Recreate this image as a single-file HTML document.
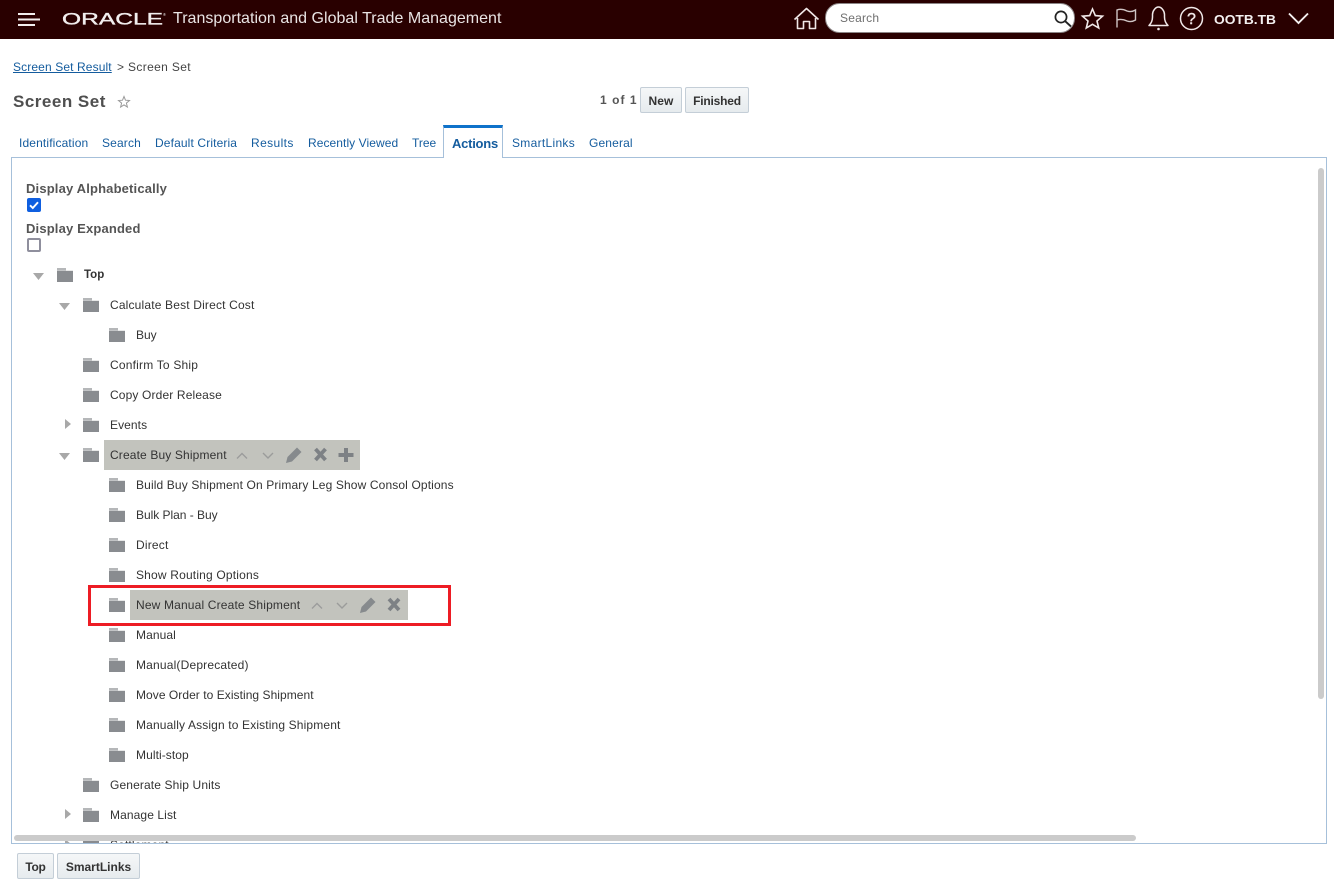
<!DOCTYPE html>
<html><head><meta charset="utf-8"><title>Screen Set</title>
<style>
html,body{margin:0;padding:0;background:#fff;width:1334px;height:884px;overflow:hidden;font-family:"Liberation Sans",Arial,sans-serif}
.a{position:absolute;white-space:nowrap}
#hd{position:absolute;left:0;top:0;width:1334px;height:39px;background:#290000}
.tab{position:absolute;top:136px;font-size:12px;line-height:15px;color:#145c9e;white-space:nowrap}
.lbl{position:absolute;font-size:13px;font-weight:bold;color:#555;letter-spacing:.16px;line-height:16px;white-space:nowrap}
.btn{position:absolute;box-sizing:border-box;height:26px;border:1px solid #c4ced7;border-radius:2px;background:linear-gradient(#f5f7f8,#e6ebee);font-size:12px;font-weight:bold;color:#333;text-align:center;line-height:27px}
#clip{position:absolute;left:12px;top:158px;width:1314px;height:685px;overflow:hidden}
.t{position:absolute;font-size:12px;line-height:16px;color:#333;white-space:nowrap;letter-spacing:.14px}
.hl{position:absolute;background:#c2c3bd;height:30px}
</style></head><body>
<div id="hd"></div>
<svg class="a" style="left:0;top:0" width="1334" height="39">
 <g fill="#f2eeee"><rect x="18" y="13" width="17" height="2"/><rect x="18" y="18.5" width="22" height="2"/><rect x="18" y="24" width="17" height="2"/></g>
 <text x="62" y="24.5" font-family="Liberation Sans" font-size="17" fill="#f2eeee" stroke="#f2eeee" stroke-width=".35" textLength="101" lengthAdjust="spacingAndGlyphs">ORACLE</text>
 <text x="163" y="16" font-family="Liberation Sans" font-size="4" fill="#f2eeee">®</text>
 <!-- home -->
 <path d="M794.5 19.5 L806.5 8.5 L818.5 19.5 M797.5 18 V28.5 H803.5 V21.5 H809.5 V28.5 H815.5 V18" fill="none" stroke="#f0e8e8" stroke-width="1.6" stroke-linejoin="round"/>
 <!-- search -->
 <rect x="825.5" y="3.5" width="249" height="29" rx="14" fill="#fff" stroke="#8b8586" stroke-width="1"/>
 <circle cx="1061" cy="17" r="5.6" fill="none" stroke="#222" stroke-width="1.7"/>
 <path d="M1065.2 21.2 L1071 26.5" stroke="#222" stroke-width="1.9" fill="none"/>
 <!-- star -->
 <path d="M1092.5 9 L1095.3 15.6 L1102.5 16.2 L1097 21 L1098.7 28 L1092.5 24.3 L1086.3 28 L1088 21 L1082.5 16.2 L1089.7 15.6 Z" fill="none" stroke="#f0e8e8" stroke-width="1.6" stroke-linejoin="miter"/>
 <!-- flag -->
 <path d="M1117 27.5 V10 C1121 8.5 1124 9.5 1127 11 C1130 12 1133 11.5 1135.5 10 V20 C1133 21.5 1130 22 1127 21 C1124 19.5 1121 18.8 1117 20" fill="none" stroke="#cfc4c4" stroke-width="1.4"/>
 <!-- bell -->
 <path d="M1149 25.5 C1151.5 23 1152.5 20.5 1152.5 17 V14.5 C1152.5 11 1155.5 7 1158.5 7 C1161.5 7 1164.5 11 1164.5 14.5 V17 C1164.5 20.5 1165.5 23 1168 25.5 Z" fill="none" stroke="#f0e8e8" stroke-width="1.5" stroke-linejoin="round"/>
 <circle cx="1158.5" cy="29" r="1.3" fill="#f0e8e8"/>
 <!-- help -->
 <circle cx="1191.5" cy="18.5" r="11" fill="none" stroke="#f0e8e8" stroke-width="1.5"/>
 <text x="1191.5" y="24" text-anchor="middle" font-family="Liberation Sans" font-size="16" fill="#f0e8e8" stroke="#f0e8e8" stroke-width=".4">?</text>
 <text x="1214" y="24" font-family="Liberation Sans" font-size="12.5" font-weight="bold" fill="#f4f0f0" textLength="62" lengthAdjust="spacingAndGlyphs">OOTB.TB</text>
 <path d="M1289 13.5 L1298.5 23 L1308 13.5" fill="none" stroke="#f4f0f0" stroke-width="1.9"/>
</svg>
<div class="a" style="left:173px;top:9px;font-size:16px;line-height:19px;color:#e9e4e4;letter-spacing:.02px">Transportation and Global Trade Management</div>
<div class="a" style="left:840px;top:11px;font-size:12px;line-height:15px;color:#6f6f6f;letter-spacing:.2px">Search</div>

<div class="a" style="left:13px;top:60px;font-size:12px;line-height:15px;color:#145c9e;text-decoration:underline;letter-spacing:.12px">Screen Set Result</div>
<div class="a" style="left:117px;top:60px;font-size:12px;line-height:15px;color:#444;letter-spacing:.35px">&gt; Screen Set</div>
<div class="a" style="left:13px;top:92px;font-size:17px;line-height:20px;font-weight:bold;color:#4f4f4f;letter-spacing:.5px">Screen Set</div>
<svg class="a" style="left:117px;top:95px" width="14" height="14"><path d="M7 1.5 L8.5 5.2 L12.5 5.5 L9.4 8.1 L10.4 12 L7 9.9 L3.6 12 L4.6 8.1 L1.5 5.5 L5.5 5.2 Z" fill="none" stroke="#9a9a9a" stroke-width="1"/></svg>
<div class="a" style="left:600px;top:93px;font-size:12px;line-height:15px;font-weight:bold;color:#555;letter-spacing:1.05px">1 of 1</div>
<div class="btn" style="left:640px;top:87px;width:42px;letter-spacing:.1px">New</div>
<div class="btn" style="left:685px;top:87px;width:64px;letter-spacing:-.2px">Finished</div>

<!-- tabs -->
<div class="tab" style="left:19px;letter-spacing:.14px">Identification</div>
<div class="tab" style="left:102px;letter-spacing:.15px">Search</div>
<div class="tab" style="left:155px;letter-spacing:.13px">Default Criteria</div>
<div class="tab" style="left:251px;letter-spacing:.4px">Results</div>
<div class="tab" style="left:308px;letter-spacing:.07px">Recently Viewed</div>
<div class="tab" style="left:412px">Tree</div>
<div class="tab" style="left:512px;letter-spacing:.3px">SmartLinks</div>
<div class="tab" style="left:589px;letter-spacing:.15px">General</div>

<!-- panel -->
<div class="a" style="left:11px;top:157px;width:1316px;height:687px;box-sizing:border-box;border:1px solid #a6c0da"></div>
<div class="a" style="left:443px;top:125px;width:60px;height:33px;box-sizing:border-box;background:#fff;border:1px solid #a6c0da;border-top:3px solid #0f72ca;border-bottom:0"></div>
<div class="a" style="left:452px;top:136px;font-size:13px;font-weight:bold;line-height:16px;color:#145c9e;letter-spacing:-.25px">Actions</div>

<div class="lbl" style="left:26px;top:181px">Display Alphabetically</div>
<svg class="a" style="left:27px;top:198px" width="14" height="14"><rect width="14" height="14" rx="2" fill="#0f5fe0"/><path d="M3 7.3 L5.8 10 L11 4.2" fill="none" stroke="#fff" stroke-width="1.9"/></svg>
<div class="lbl" style="left:26px;top:221px">Display Expanded</div>
<div class="a" style="left:27px;top:238px;width:14px;height:14px;box-sizing:border-box;border:2px solid #8f8f9d;border-radius:2px;background:#fff"></div>

<svg width="0" height="0" style="position:absolute"><defs>
 <symbol id="fo" viewBox="0 0 16 14"><path d="M0 0 H9 V2.5 H0 Z" fill="#b5b7b9"/><path d="M0 2.5 H16 V3 H0 Z" fill="#cfd0d2"/><path d="M0 3 H16 V14 H0 Z" fill="#898c90"/></symbol>
</defs></svg>

<div id="clip">
<div class="hl" style="left:92px;top:282px;width:256px"></div>
<div class="hl" style="left:118px;top:432px;width:278px"></div>

<svg class="a" style="left:0;top:0" width="1314" height="685" id="ic">
 <g fill="#a8a8a8">
  <path d="M21 115 h11 l-5.5 7z"/>
  <path d="M47 145 h11 l-5.5 7z"/>
  <path d="M47 295 h11 l-5.5 7z"/>
  <path d="M53 261 v10 l6 -5z"/>
  <path d="M53 651 v10 l6 -5z"/>
  <path d="M53 681 v10 l6 -5z"/>
 </g>
 <g>
  <use href="#fo" x="45" y="110" width="16" height="14"/>
  <use href="#fo" x="71" y="140" width="16" height="14"/>
  <use href="#fo" x="97" y="170" width="16" height="14"/>
  <use href="#fo" x="71" y="200" width="16" height="14"/>
  <use href="#fo" x="71" y="230" width="16" height="14"/>
  <use href="#fo" x="71" y="260" width="16" height="14"/>
  <use href="#fo" x="71" y="290" width="16" height="14"/>
  <use href="#fo" x="97" y="320" width="16" height="14"/>
  <use href="#fo" x="97" y="350" width="16" height="14"/>
  <use href="#fo" x="97" y="380" width="16" height="14"/>
  <use href="#fo" x="97" y="410" width="16" height="14"/>
  <use href="#fo" x="97" y="440" width="16" height="14"/>
  <use href="#fo" x="97" y="470" width="16" height="14"/>
  <use href="#fo" x="97" y="500" width="16" height="14"/>
  <use href="#fo" x="97" y="530" width="16" height="14"/>
  <use href="#fo" x="97" y="560" width="16" height="14"/>
  <use href="#fo" x="97" y="590" width="16" height="14"/>
  <use href="#fo" x="71" y="620" width="16" height="14"/>
  <use href="#fo" x="71" y="650" width="16" height="14"/>
  <use href="#fo" x="71" y="680" width="16" height="14"/>
 </g>
 <!-- row action icons: Create Buy Shipment -->
 <g transform="translate(-12,-158)">
  <path d="M237 458.5 L242 453.5 L247 458.5" fill="none" stroke="#9b9c9b" stroke-width="1.4"/>
  <path d="M263 453 L268 458 L273 453" fill="none" stroke="#9b9c9b" stroke-width="1.4"/>
  <path d="M286 463 L287.5 457 L297 447.5 L301.5 452 L292 461.5 Z" fill="#868a8d"/>
  <path d="M315.5 449 L325.5 460 M325.5 449 L315.5 460" fill="none" stroke="#7d8185" stroke-width="3.8"/>
  <path d="M344 448 h4 v5 h5.5 v4 h-5.5 v5 h-4 v-5 h-5.5 v-4 h5.5 z" fill="#7d8185"/>
 </g>
 <g transform="translate(-12,-158)">
  <path d="M312 608.5 L317 603.5 L322 608.5" fill="none" stroke="#9b9c9b" stroke-width="1.4"/>
  <path d="M337 603 L342 608 L347 603" fill="none" stroke="#9b9c9b" stroke-width="1.4"/>
  <path d="M360 613 L361.5 607 L371 597.5 L375.5 602 L366 611.5 Z" fill="#868a8d"/>
  <path d="M389 599 L399 610 M399 599 L389 610" fill="none" stroke="#7d8185" stroke-width="3.8"/>
 </g>
</svg>

<div class="t" style="left:72px;top:109px;font-size:11.5px;font-weight:bold;letter-spacing:0">Top</div>
<div class="t" style="left:98px;top:139px;letter-spacing:.17px">Calculate Best Direct Cost</div>
<div class="t" style="left:124px;top:169px;letter-spacing:0">Buy</div>
<div class="t" style="left:98px;top:199px;letter-spacing:.2px">Confirm To Ship</div>
<div class="t" style="left:98px;top:229px">Copy Order Release</div>
<div class="t" style="left:98px;top:259px;letter-spacing:.08px">Events</div>
<div class="t" style="left:98px;top:289px">Create Buy Shipment</div>
<div class="t" style="left:124px;top:319px;letter-spacing:.13px">Build Buy Shipment On Primary Leg Show Consol Options</div>
<div class="t" style="left:124px;top:349px;letter-spacing:-.03px">Bulk Plan - Buy</div>
<div class="t" style="left:124px;top:379px;letter-spacing:.2px">Direct</div>
<div class="t" style="left:124px;top:409px;letter-spacing:.18px">Show Routing Options</div>
<div class="t" style="left:124px;top:439px;letter-spacing:.16px">New Manual Create Shipment</div>
<div class="t" style="left:124px;top:469px;letter-spacing:.08px">Manual</div>
<div class="t" style="left:124px;top:499px;letter-spacing:.18px">Manual(Deprecated)</div>
<div class="t" style="left:124px;top:529px;letter-spacing:.05px">Move Order to Existing Shipment</div>
<div class="t" style="left:124px;top:559px">Manually Assign to Existing Shipment</div>
<div class="t" style="left:124px;top:589px;letter-spacing:.08px">Multi-stop</div>
<div class="t" style="left:98px;top:619px;letter-spacing:.13px">Generate Ship Units</div>
<div class="t" style="left:98px;top:649px;letter-spacing:.1px">Manage List</div>
<div class="t" style="left:98px;top:679px">Settlement</div>
</div>

<!-- scrollbars -->
<div class="a" style="left:1318px;top:168px;width:6px;height:531px;background:#cbcbcb;border-radius:3px"></div>
<div class="a" style="left:14px;top:835px;width:1122px;height:6px;background:#cbcbcb;border-radius:3px"></div>

<!-- red highlight -->
<div class="a" style="left:88px;top:585px;width:363px;height:41px;box-sizing:border-box;border:3px solid #ed1c24"></div>

<div class="btn" style="left:17px;top:853px;width:37px;letter-spacing:-.3px">Top</div>
<div class="btn" style="left:57px;top:853px;width:83px">SmartLinks</div>
</body></html>
